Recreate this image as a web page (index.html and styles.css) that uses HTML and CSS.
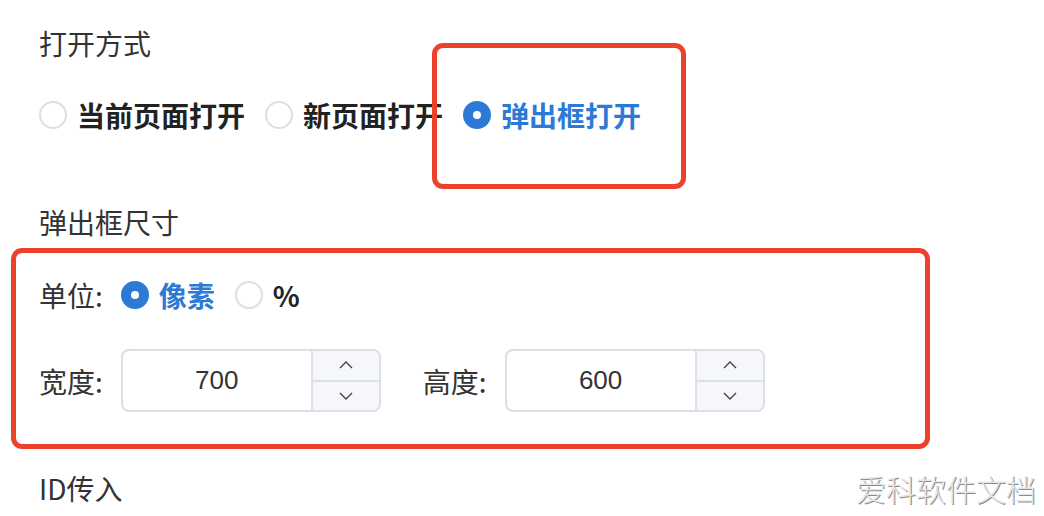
FILE: index.html
```html
<!DOCTYPE html>
<html lang="zh-CN">
<head>
    <meta charset="UTF-8">
    <meta name="viewport" content="width=device-width, initial-scale=1.0">
    <title>弹出框设置</title>
    <link rel="stylesheet" href="styles.css">
</head>
<body>
    <!-- 打开方式 -->
    <div class="field-title first">打开方式</div>
    <div class="radio-group open-mode">
        <label class="radio"><span class="radio-dot"></span><span class="radio-text">当前页面打开</span></label>
        <label class="radio"><span class="radio-dot"></span><span class="radio-text">新页面打开</span></label>
        <label class="radio checked"><span class="radio-dot"></span><span class="radio-text">弹出框打开</span></label>
        <div class="mark mark-open"></div>
    </div>

    <!-- 弹出框尺寸 -->
    <div class="field-title size-title">弹出框尺寸</div>
    <div class="size-box">
        <div class="row unit-row">
            <span class="row-label">单位:</span>
            <label class="radio checked"><span class="radio-dot"></span><span class="radio-text">像素</span></label>
            <label class="radio"><span class="radio-dot"></span><span class="radio-text">%</span></label>
        </div>
        <div class="row">
            <span class="row-label">宽度:</span>
            <div class="number-input">
                <div class="number-value">700</div>
                <div class="number-steps">
                    <div class="step"><svg width="16" height="10" viewBox="0 0 16 10"><path d="M2 8 L8 2 L14 8" /></svg></div>
                    <div class="step"><svg width="16" height="10" viewBox="0 0 16 10"><path d="M2 2 L8 8 L14 2" /></svg></div>
                </div>
            </div>
            <span class="row-label second">高度:</span>
            <div class="number-input">
                <div class="number-value">600</div>
                <div class="number-steps">
                    <div class="step"><svg width="16" height="10" viewBox="0 0 16 10"><path d="M2 8 L8 2 L14 8" /></svg></div>
                    <div class="step"><svg width="16" height="10" viewBox="0 0 16 10"><path d="M2 2 L8 8 L14 2" /></svg></div>
                </div>
            </div>
        </div>
    </div>

    <!-- ID传入 -->
    <div class="field-title id-title">ID传入</div>

    <div class="watermark">爱科软件文档</div>
</body>
</html>
```

FILE: styles.css
```css
/* General Styling */
body {
    margin: 0;
    padding: 23px 0 0 39px;
    font-family: "Noto Sans CJK SC", "Noto Sans", sans-serif;
    color: #333;
    background: #fff;
    width: 1044px;
    height: 516px;
    box-sizing: border-box;
    overflow: hidden;
    position: relative;
}
.field-title {
    font-size: 28px;
    line-height: 40px;
    height: 40px;
}
.size-title {
    margin-top: 67px;
}
.id-title {
    margin-top: 19px;
}

/* Radio */
.radio-group {
    display: flex;
    align-items: center;
    height: 40px;
    margin-top: 32px;
    position: relative;
}
.radio {
    display: flex;
    align-items: center;
    margin-right: 20px;
}
.radio-dot {
    width: 28px;
    height: 28px;
    box-sizing: border-box;
    border: 2px solid #dcdfe6;
    border-radius: 50%;
    margin-right: 10px;
    background: #fff;
    position: relative;
}
.radio-text {
    font-size: 28px;
    font-weight: bold;
    color: #222;
    line-height: 40px;
}
.radio.checked .radio-dot {
    border-color: #2d7ad6;
    background: #2d7ad6;
}
.radio.checked .radio-dot::after {
    content: "";
    position: absolute;
    left: 8px;
    top: 8px;
    width: 8px;
    height: 8px;
    border-radius: 50%;
    background: #fff;
}
.radio.checked .radio-text {
    color: #2d7ad6;
}

/* Red annotation */
.mark-open {
    position: absolute;
    left: 393px;
    top: -52px;
    width: 254px;
    height: 146px;
    box-sizing: border-box;
    border: 5px solid #ec412a;
    border-radius: 11px;
}
.size-box {
    margin: 6px 0 0 -28px;
    width: 919px;
    height: 201px;
    box-sizing: border-box;
    border: 5px solid #ec412a;
    border-radius: 11px;
    padding: 22px 0 0 23px;
}

/* Rows */
.row {
    display: flex;
    align-items: center;
}
.unit-row {
    height: 40px;
    margin-bottom: 34px;
}
.row-label {
    font-size: 28px;
    line-height: 40px;
    margin-right: 18px;
}
.row-label.second {
    margin-left: 42px;
}

/* Number input */
.number-input {
    display: flex;
    width: 260px;
    height: 63px;
    box-sizing: border-box;
    border: 2px solid #dcdfe6;
    border-radius: 8px;
    overflow: hidden;
}
.number-value {
    flex: 1;
    display: flex;
    align-items: center;
    justify-content: center;
    font-family: "Liberation Sans", Arial, sans-serif;
    font-size: 26px;
    color: #333;
}
.number-steps {
    width: 66px;
    display: flex;
    flex-direction: column;
    border-left: 2px solid #dcdfe6;
    background: #f5f7fa;
}
.step {
    flex: 1;
    display: flex;
    align-items: center;
    justify-content: center;
}
.step + .step {
    border-top: 2px solid #dcdfe6;
}
.step svg path {
    fill: none;
    stroke: #444;
    stroke-width: 1.4;
}

/* Watermark */
.watermark {
    position: absolute;
    right: 8px;
    bottom: 6px;
    font-size: 30px;
    font-weight: 300;
    color: #e6e6e6;
    text-shadow: 1px 1px 0 #8a8a8a;
}
```
